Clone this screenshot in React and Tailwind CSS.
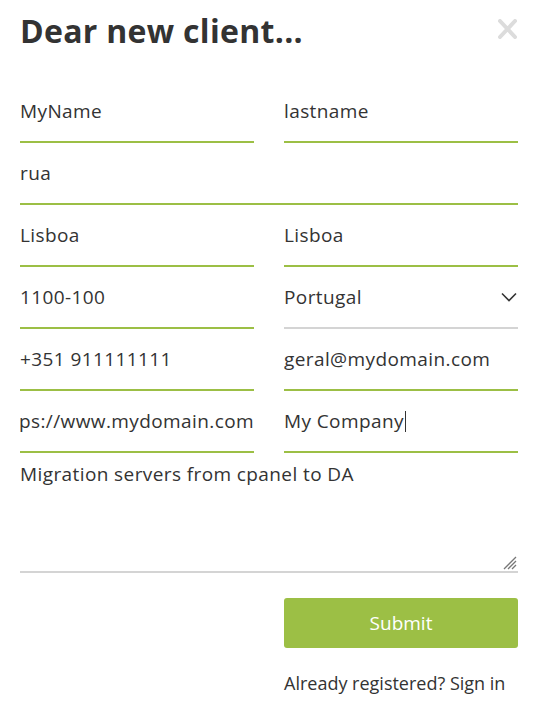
import React from "react";

function Field({ value, className = "", border = "border-[#9cbf45]", children }) {
  return (
    <div className={`h-[62px] border-b-2 ${border} flex items-center text-[19px] tracking-[0.4px] text-[#333] overflow-hidden whitespace-nowrap ${className}`}>
      {children ?? value}
    </div>
  );
}

export default function App() {
  return (
    <div className="w-[560px] h-[708px] bg-white pl-5 pr-[42px] font-['Open_Sans',sans-serif] text-[#333]">
      <div className="h-[81px] flex justify-between items-start">
        <h1 className="text-[32px] font-bold leading-none mt-[15px] tracking-[0.3px] text-[#333]">Dear new client...</h1>
        <svg className="mt-[19px] mr-[1px]" width="19" height="20" viewBox="0 0 19 20">
          <path d="M2 2 L17 18 M17 2 L2 18" stroke="#dcdcdc" strokeWidth="4" strokeLinecap="round" />
        </svg>
      </div>
      <div className="grid grid-cols-2 gap-x-[30px]">
        <Field value="MyName" />
        <Field value="lastname" />
        <Field value="rua" className="col-span-2" />
        <Field value="Lisboa" />
        <Field value="Lisboa" />
        <Field value="1100-100" />
        <Field border="border-[#d4d4d4]" className="justify-between">
          <span>Portugal</span>
          <svg className="mr-[1px] shrink-0" width="16" height="10" viewBox="0 0 16 10">
            <path d="M1 1.5 L8 8.5 L15 1.5" stroke="#333" strokeWidth="1.6" fill="none" />
          </svg>
        </Field>
        <Field value="+351 911111111" />
        <Field value="geral@mydomain.com" />
        <Field className="justify-end">
          <span>https://www.mydomain.com</span>
        </Field>
        <Field>
          <span>My Company</span>
          <span className="inline-block w-px h-[21px] ml-[1px] bg-[#333]" />
        </Field>
        <div className="col-span-2 relative h-[120px] border-b-2 border-[#d4d4d4] pt-[8px] text-[19px] tracking-[0.4px] leading-[26px]">
          Migration servers from cpanel to DA
          <svg className="absolute right-[1px] bottom-[1px]" width="14" height="14" viewBox="0 0 14 14">
            <path d="M13 1 L1 13 M13 5 L5 13 M13 9 L9 13" stroke="#777" strokeWidth="1.3" />
          </svg>
        </div>
        <div />
        <div className="pt-[25px]">
          <button className="w-full h-[50px] rounded-[3px] bg-[#9cbf45] text-white text-[19px]">Submit</button>
          <div className="mt-[22px] text-[18px] text-[#333]">Already registered? Sign in</div>
        </div>
      </div>
    </div>
  );
}
